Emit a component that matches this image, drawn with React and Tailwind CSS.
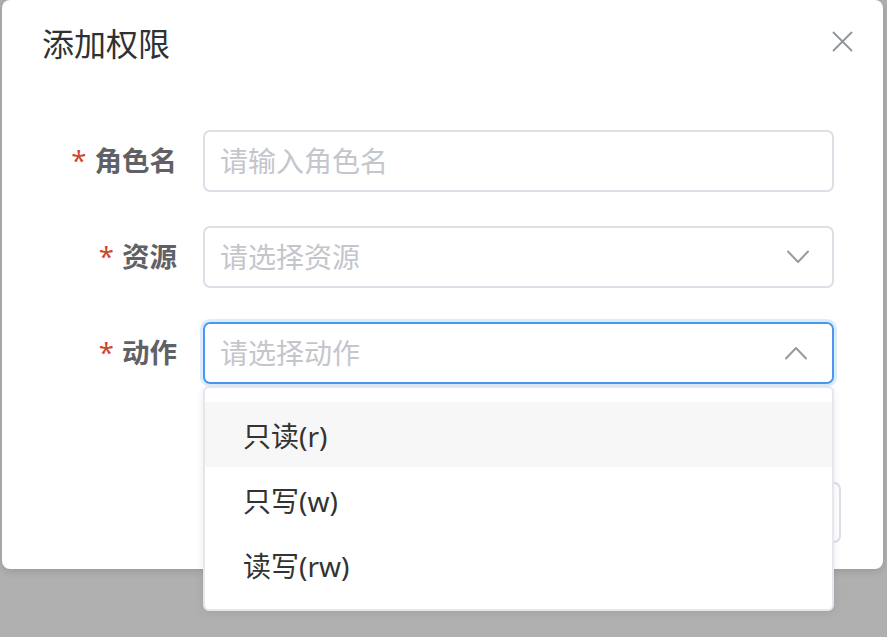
import React from 'react';

const FONT = {fontFamily: '"Noto Sans", "Noto Sans CJK SC", sans-serif'};

const Chevron = ({up}) => (
  <svg width="22" height="14" viewBox="0 0 22 14" fill="none">
    <polyline
      points={up ? '1,12.5 11,2 21,12.5' : '1,1.5 11,12 21,1.5'}
      stroke="#9a9a9a"
      strokeWidth="2"
      strokeLinecap="round"
      strokeLinejoin="round"
    />
  </svg>
);

const Label = ({children}) => (
  <div className="flex w-[201px] shrink-0 items-center justify-end pr-[26px] text-[27.5px] font-bold text-[#5f6166]">
    <span className="mr-[8px] font-normal text-[#d0472f]">*</span>
    {children}
  </div>
);

const options = ['只读(r)', '只写(w)', '读写(rw)'];

export default function App() {
  return (
    <div
      className="h-[637px] w-[887px] overflow-hidden bg-[#b0b0b0]"
      style={FONT}
    >
      <div className="relative ml-[2px] flex h-[569px] w-[881px] flex-col rounded-[8px] bg-white shadow-[0_2px_8px_rgba(0,0,0,0.15)]">
        {/* HEADER */}
        <div className="px-[40px] pt-[23px] text-[32px] leading-[42px] text-[#303133]">
          添加权限
        </div>
        <button className="absolute right-[30px] top-[31px] h-[21px] w-[21px]">
          <svg width="21" height="21" viewBox="0 0 21 21">
            <line x1="1" y1="1" x2="20" y2="20" stroke="#909399" strokeWidth="1.8" />
            <line x1="20" y1="1" x2="1" y2="20" stroke="#909399" strokeWidth="1.8" />
          </svg>
        </button>

        {/* FORM */}
        <div className="mt-[65px] flex flex-col gap-[34px]">
          <div className="flex h-[62px] items-center">
            <Label>角色名</Label>
            <div className="flex h-[62px] w-[631px] items-center rounded-[7px] border-2 border-[#dcdfe6] px-[15px] text-[28px] text-[#c4c6cc]">
              请输入角色名
            </div>
          </div>

          <div className="flex h-[62px] items-center">
            <Label>资源</Label>
            <div className="flex h-[62px] w-[631px] items-center justify-between rounded-[7px] border-2 border-[#dcdfe6] pl-[15px] pr-[23px] text-[28px] text-[#c4c6cc]">
              请选择资源
              <Chevron />
            </div>
          </div>

          <div className="flex h-[62px] items-center">
            <Label>动作</Label>
            <div className="relative w-[631px]">
              <div className="flex h-[62px] items-center justify-between rounded-[7px] border-2 border-[#4a97f0] pl-[15px] pr-[25px] text-[28px] text-[#c4c6cc] shadow-[0_0_0_3px_#dcebfd]">
                请选择动作
                <Chevron up />
              </div>

              {/* DROPDOWN */}
              <div className="absolute left-0 top-full z-10 mt-[2px] h-[225px] w-[631px] rounded-[6px] border-2 border-[#e4e7ed] bg-white pb-[12px] pt-[14px] shadow-[0_2px_10px_rgba(0,0,0,0.08)]">
                {options.map((o, i) => (
                  <div
                    key={o}
                    className={`flex h-[65px] items-center px-[38px] pt-[2px] text-[28px] text-[#333333] ${
                      i === 0 ? 'bg-[#f7f7f7]' : ''
                    }`}
                  >
                    {o}
                  </div>
                ))}
              </div>
            </div>
          </div>
        </div>

        {/* FOOTER */}
        <div className="mt-[98px] flex justify-end pr-[42px]">
          <button className="h-[61px] w-[130px] rounded-[7px] border-2 border-[#dcdfe6] bg-white text-[27px] text-[#606266]">
            取消
          </button>
        </div>
      </div>
    </div>
  );
}
